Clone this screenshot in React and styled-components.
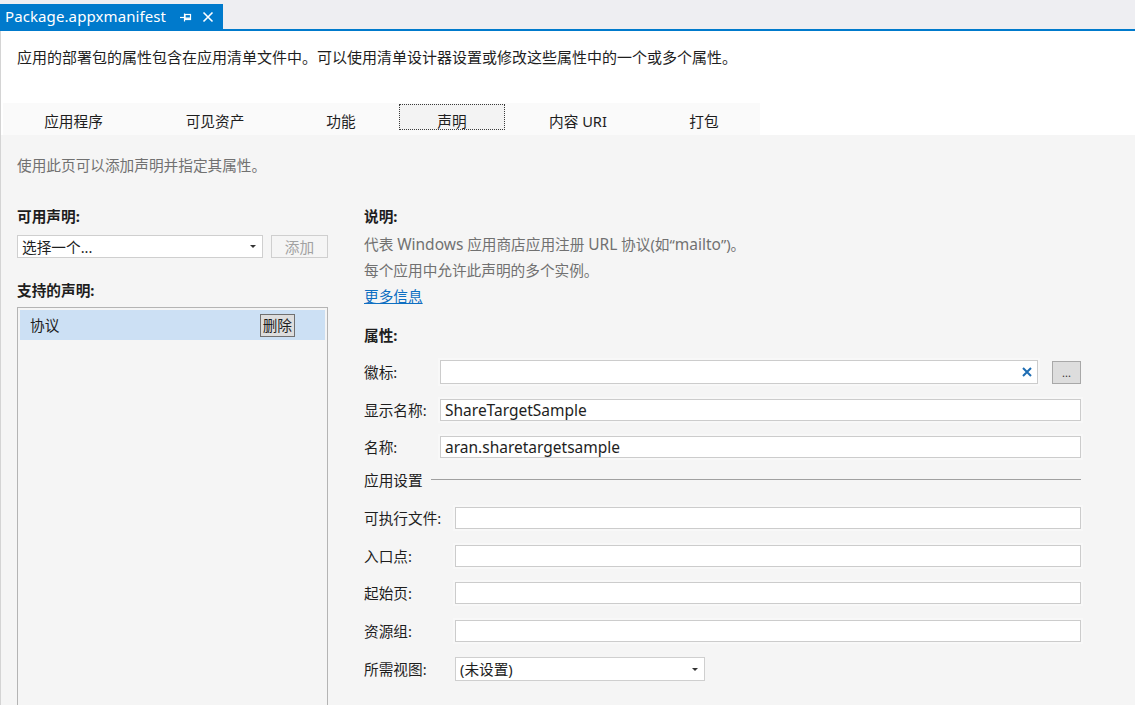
import React from "react";
import styled, { createGlobalStyle } from "styled-components";

const Global = createGlobalStyle`
  html, body { margin: 0; padding: 0; background: #f5f5f5; }
  body { font-family: "Noto Sans", "Noto Sans CJK SC", sans-serif; font-size: 14.67px; color: #1e1e1e; }
  * { box-sizing: border-box; }
`;

const Page = styled.div`
  width: 1135px;
  height: 705px;
  overflow: hidden;
  display: flex;
  flex-direction: column;
  background: #f5f5f5;
`;

const DocStrip = styled.div`
  height: 31px;
  background: #eeeef2;
  border-bottom: 2px solid #007acc;
  display: flex;
  align-items: flex-end;
  flex-shrink: 0;
`;

const DocTab = styled.div`
  width: 223px;
  height: 25px;
  background: #007acc;
  color: #fff;
  display: flex;
  align-items: center;
  padding-left: 5px;
  padding-right: 4px;
  font-size: 15px;
  line-height: 20px;
`;

const DocTitle = styled.span`
  flex: 1;
  padding-bottom: 2px;
  letter-spacing: 0.1px;
`;

const TabIcon = styled.span`
  display: flex;
  align-items: center;
  justify-content: center;
  width: 22px;
  height: 20px;
`;

const Header = styled.div`
  background: #fff;
  border-left: 1px solid #d4d4d4;
  padding: 16px 0 0 16px;
  flex-shrink: 0;
`;

const HeaderText = styled.div`
  font-size: 15px;
  line-height: 20px;
  height: 20px;
`;

const TabRow = styled.div`
  margin: 36px 0 0 -14px;
  height: 32px;
  display: flex;
`;

const TabStrip = styled.div`
  display: flex;
  background: #fafafa;
`;

const TabItem = styled.div`
  width: ${p => p.$w}px;
  height: 32px;
  padding: 1px 3px 0;
`;

const TabLabel = styled.div`
  height: 26px;
  padding-top: 6px;
  line-height: 20px;
  text-align: center;
  border: 1px dotted ${p => (p.$active ? "#3a3a3a" : "transparent")};
  background: ${p => (p.$active ? "#f3f3f3" : "transparent")};
  color: #1e1e1e;
`;

const Body = styled.div`
  flex: 1;
  border-left: 1px solid #d4d4d4;
  padding: 20px 0 0 16px;
  display: flex;
  flex-direction: column;
`;

const Muted = styled.div`
  color: #717171;
  line-height: ${p => p.$lh || 20}px;
`;

const Columns = styled.div`
  display: flex;
  gap: 36px;
  margin-top: 31px;
`;

const LeftCol = styled.div`
  width: 311px;
  display: flex;
  flex-direction: column;
`;

const RightCol = styled.div`
  width: 717px;
  display: flex;
  flex-direction: column;
`;

const Heading = styled.div`
  font-weight: 700;
  line-height: 20px;
  height: 20px;
  margin-top: ${p => p.$mt || 0}px;
`;

const SelectRow = styled.div`
  display: flex;
  gap: 8px;
  margin-top: 9px;
`;

const SelectBox = styled.div`
  width: ${p => p.$w}px;
  height: ${p => p.$h || 23}px;
  background: #fff;
  border: 1px solid #cfcfcf;
  display: flex;
  align-items: center;
  justify-content: space-between;
  padding: 0 4px 0 4px;
  line-height: 20px;
  color: #1e1e1e;
`;

const Caret = styled.span`
  width: 0;
  height: 0;
  border-left: 3px solid transparent;
  border-right: 3px solid transparent;
  border-top: 3px solid #333;
  margin-right: 2px;
`;

const GhostButton = styled.div`
  width: 57px;
  height: 23px;
  border: 1px solid #cfcfcf;
  background: #f5f5f5;
  color: #a2a2a2;
  display: flex;
  align-items: center;
  justify-content: center;
  line-height: 20px;
`;

const ListBox = styled.div`
  margin-top: 7px;
  height: 420px;
  border: 1px solid #b4b4b4;
  padding: 2px;
  background: #f5f5f5;
`;

const ListItem = styled.div`
  height: 30px;
  background: #cce0f4;
  display: flex;
  align-items: center;
  justify-content: space-between;
  padding: 0 30px 0 10px;
  line-height: 20px;
`;

const SmallButton = styled.div`
  height: 23px;
  padding: 0 2px;
  background: #dddddd;
  border: 1px solid #707070;
  display: flex;
  align-items: center;
  line-height: 20px;
`;

const Lines = styled.div`
  margin-top: 5px;
  display: flex;
  flex-direction: column;
`;

const Latin = styled.span`
  font-size: 15.5px;
`;

const Link = styled.a`
  color: #0e6fc2;
  text-decoration: underline;
  line-height: 26px;
  cursor: pointer;
`;

const Form = styled.div`
  margin-top: ${p => p.$mt || 15}px;
  display: flex;
  flex-direction: column;
  gap: ${p => p.$gap || 15}px;
`;

const Row = styled.div`
  display: flex;
  align-items: center;
`;

const Label = styled.div`
  width: ${p => p.$w}px;
  flex-shrink: 0;
  line-height: 20px;
  color: #1e1e1e;
`;

const Input = styled.div`
  flex: ${p => (p.$w ? "none" : 1)};
  width: ${p => (p.$w ? `${p.$w}px` : "auto")};
  height: ${p => p.$h || 22}px;
  background: #fff;
  border: 1px solid #cccccc;
  box-shadow: 0 0 0 2px #f8f8f8;
  display: flex;
  align-items: center;
  justify-content: space-between;
  padding: 0 4px 1px;
  font-size: 15.5px;
  line-height: 20px;
  color: #1e1e1e;
`;

const ClearX = styled.span`
  display: flex;
  align-items: center;
  margin-right: 1px;
`;

const DotsButton = styled.div`
  width: 29px;
  height: 23px;
  margin-left: 14px;
  background: #dddddd;
  border: 1px solid #a8a8a8;
  display: flex;
  align-items: flex-end;
  justify-content: center;
  padding-bottom: 5px;
  font-size: 11px;
  line-height: 10px;
  color: #333;
`;

const GroupRow = styled.div`
  display: flex;
  align-items: center;
  gap: 8px;
  height: 20px;
  margin-top: 11px;
`;

const GroupLine = styled.div`
  flex: 1;
  height: 1px;
  background: #a0a0a0;
`;

const Tabs = [
  ["应用程序", 141],
  ["可见资产", 142],
  ["功能", 110],
  ["声明", 112],
  ["内容 URI", 140],
  ["打包", 112],
];

const settingRows = ["可执行文件:", "入口点:", "起始页:", "资源组:"];

export default function App() {
  return (
    <Page>
      <Global />
      <DocStrip>
        <DocTab>
          <DocTitle>Package.appxmanifest</DocTitle>
          <TabIcon>
            <svg width="12" height="10" viewBox="0 0 12 10">
              <path d="M0 5.5H4" stroke="#fff" strokeWidth="1.2" />
              <path d="M4.5 1.5V9.5" stroke="#fff" strokeWidth="1.2" />
              <rect x="5" y="2.5" width="5.5" height="5" fill="none" stroke="#fff" strokeWidth="1.2" />
              <path d="M5 6.2H10.5" stroke="#fff" strokeWidth="1.4" />
            </svg>
          </TabIcon>
          <TabIcon>
            <svg width="12" height="12" viewBox="0 0 12 12">
              <path d="M1.5 1.5L10.5 10.5M10.5 1.5L1.5 10.5" stroke="#fff" strokeWidth="1.6" />
            </svg>
          </TabIcon>
        </DocTab>
      </DocStrip>
      <Header>
        <HeaderText>应用的部署包的属性包含在应用清单文件中。可以使用清单设计器设置或修改这些属性中的一个或多个属性。</HeaderText>
        <TabRow>
          <TabStrip>
            {Tabs.map(([t, w]) => (
              <TabItem key={t} $w={w}>
                <TabLabel $active={t === "声明"}>{t}</TabLabel>
              </TabItem>
            ))}
          </TabStrip>
        </TabRow>
      </Header>
      <Body>
        <Muted>使用此页可以添加声明并指定其属性。</Muted>
        <Columns>
          <LeftCol>
            <Heading>可用声明:</Heading>
            <SelectRow>
              <SelectBox $w={246}>
                <span>选择一个...</span>
                <Caret />
              </SelectBox>
              <GhostButton>添加</GhostButton>
            </SelectRow>
            <Heading $mt={22}>支持的声明:</Heading>
            <ListBox>
              <ListItem>
                <span>协议</span>
                <SmallButton>删除</SmallButton>
              </ListItem>
            </ListBox>
          </LeftCol>
          <RightCol>
            <Heading>说明:</Heading>
            <Lines>
              <Muted $lh={26}>
                代表 <Latin>Windows</Latin> 应用商店应用注册 <Latin>URL</Latin> 协议(如“<Latin>mailto</Latin>”)。
              </Muted>
              <Muted $lh={26}>每个应用中允许此声明的多个实例。</Muted>
              <div>
                <Link>更多信息</Link>
              </div>
            </Lines>
            <Heading $mt={16}>属性:</Heading>
            <Form $gap={15}>
              <Row>
                <Label $w={76}>徽标:</Label>
                <Input $h={24}>
                  <span />
                  <ClearX>
                    <svg width="10" height="10" viewBox="0 0 10 10">
                      <path d="M1 1L9 9M9 1L1 9" stroke="#1e6db3" strokeWidth="2" />
                    </svg>
                  </ClearX>
                </Input>
                <DotsButton>...</DotsButton>
              </Row>
              <Row>
                <Label $w={76}>显示名称:</Label>
                <Input>ShareTargetSample</Input>
              </Row>
              <Row>
                <Label $w={76}>名称:</Label>
                <Input>aran.sharetargetsample</Input>
              </Row>
            </Form>
            <GroupRow>
              <span>应用设置</span>
              <GroupLine />
            </GroupRow>
            <Form $mt={18} $gap={15.5}>
              {settingRows.map(l => (
                <Row key={l}>
                  <Label $w={91}>{l}</Label>
                  <Input />
                </Row>
              ))}
              <Row>
                <Label $w={91}>所需视图:</Label>
                <SelectBox $w={250} $h={24}>
                  <span>(未设置)</span>
                  <Caret />
                </SelectBox>
              </Row>
            </Form>
          </RightCol>
        </Columns>
      </Body>
    </Page>
  );
}
